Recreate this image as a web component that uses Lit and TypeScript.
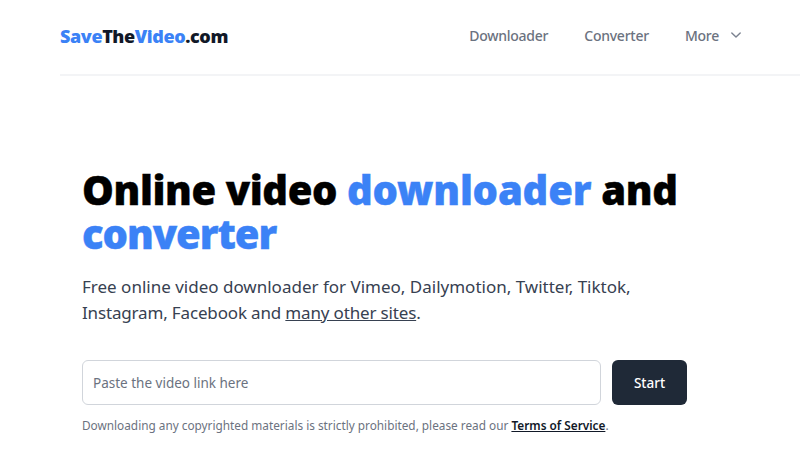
import { LitElement, html, css } from "lit";
import { customElement } from "lit/decorators.js";

@customElement("app-root")
export class AppRoot extends LitElement {
  static styles = css`
    :host {
      display: block;
      width: 800px;
      height: 453px;
      overflow: hidden;
      background: #fff;
      font-family: "Noto Sans", "Open Sans", sans-serif;
    }
    .header {
      margin-left: 60px;
      height: 76px;
      box-sizing: border-box;
      border-bottom: 2px solid #f3f4f6;
      display: flex;
      align-items: center;
      justify-content: space-between;
      padding-bottom: 2px;
    }
    .logo {
      font-size: 18px;
      font-weight: 900;
      letter-spacing: -0.4px;
      color: #111827;
    }
    .blue { color: #3b82f6; }
    nav {
      display: flex;
      align-items: center;
      gap: 36px;
      margin-right: 57px;
      padding-bottom: 2px;
      font-size: 14px;
      font-weight: 500;
      letter-spacing: -0.25px;
      color: #6b7280;
    }
    .more { display: flex; align-items: center; gap: 10px; }
    .more svg { width: 14px; height: 14px; }
    main {
      padding: 92px 0 0 82px;
    }
    h1 {
      margin: 0;
      font-size: 40px;
      line-height: 44px;
      font-weight: 900;
      letter-spacing: -0.4px;
      -webkit-text-stroke: 0.4px currentColor;
      color: #000;
    }
    .wide { letter-spacing: -0.2px; }
    .tight { letter-spacing: -1.05px; }
    .lead {
      margin: 18px 0 0;
      font-size: 17px;
      line-height: 26px;
      color: #374151;
    }
    .lead-second { letter-spacing: -0.16px; }
    .lead a { color: inherit; text-decoration: underline; }
    form {
      display: flex;
      gap: 11px;
      margin-top: 34px;
    }
    .input {
      width: 519px;
      height: 45px;
      box-sizing: border-box;
      border: 1px solid #d1d5db;
      border-radius: 6px;
      padding: 0 10px;
      display: flex;
      align-items: center;
      font-size: 13.5px;
      color: #6b7280;
    }
    .start {
      width: 75px;
      height: 45px;
      box-sizing: border-box;
      border-radius: 6px;
      background: #1f2937;
      color: #fff;
      display: flex;
      align-items: center;
      justify-content: center;
      font-size: 13.5px;
      font-weight: 500;
    }
    .note {
      margin: 11px 0 0;
      font-size: 11.8px;
      line-height: 18px;
      color: #6b7280;
    }
    .note a { color: #111827; font-weight: 600; text-decoration: underline; }
  `;

  render() {
    return html`
      <header class="header">
        <div class="logo"><span class="blue">Save</span>The<span class="blue">Video</span>.com</div>
        <nav>
          <span>Downloader</span>
          <span>Converter</span>
          <span class="more">More
            <svg viewBox="0 0 20 20" fill="none" stroke="#7b8290" stroke-width="2" stroke-linecap="round" stroke-linejoin="round"><path d="M4 7l6 6 6-6"/></svg>
          </span>
        </nav>
      </header>
      <main>
        <h1>Online video <span class="blue wide">downloader</span> and<br /><span class="blue tight">converter</span></h1>
        <p class="lead">Free online video downloader for Vimeo, Dailymotion, Twitter, Tiktok,<br /><span class="lead-second">Instagram, Facebook and <a>many other sites</a>.</span></p>
        <form>
          <div class="input">Paste the video link here</div>
          <div class="start">Start</div>
        </form>
        <p class="note">Downloading any copyrighted materials is strictly prohibited, please read our <a>Terms of Service</a>.</p>
      </main>
    `;
  }
}
